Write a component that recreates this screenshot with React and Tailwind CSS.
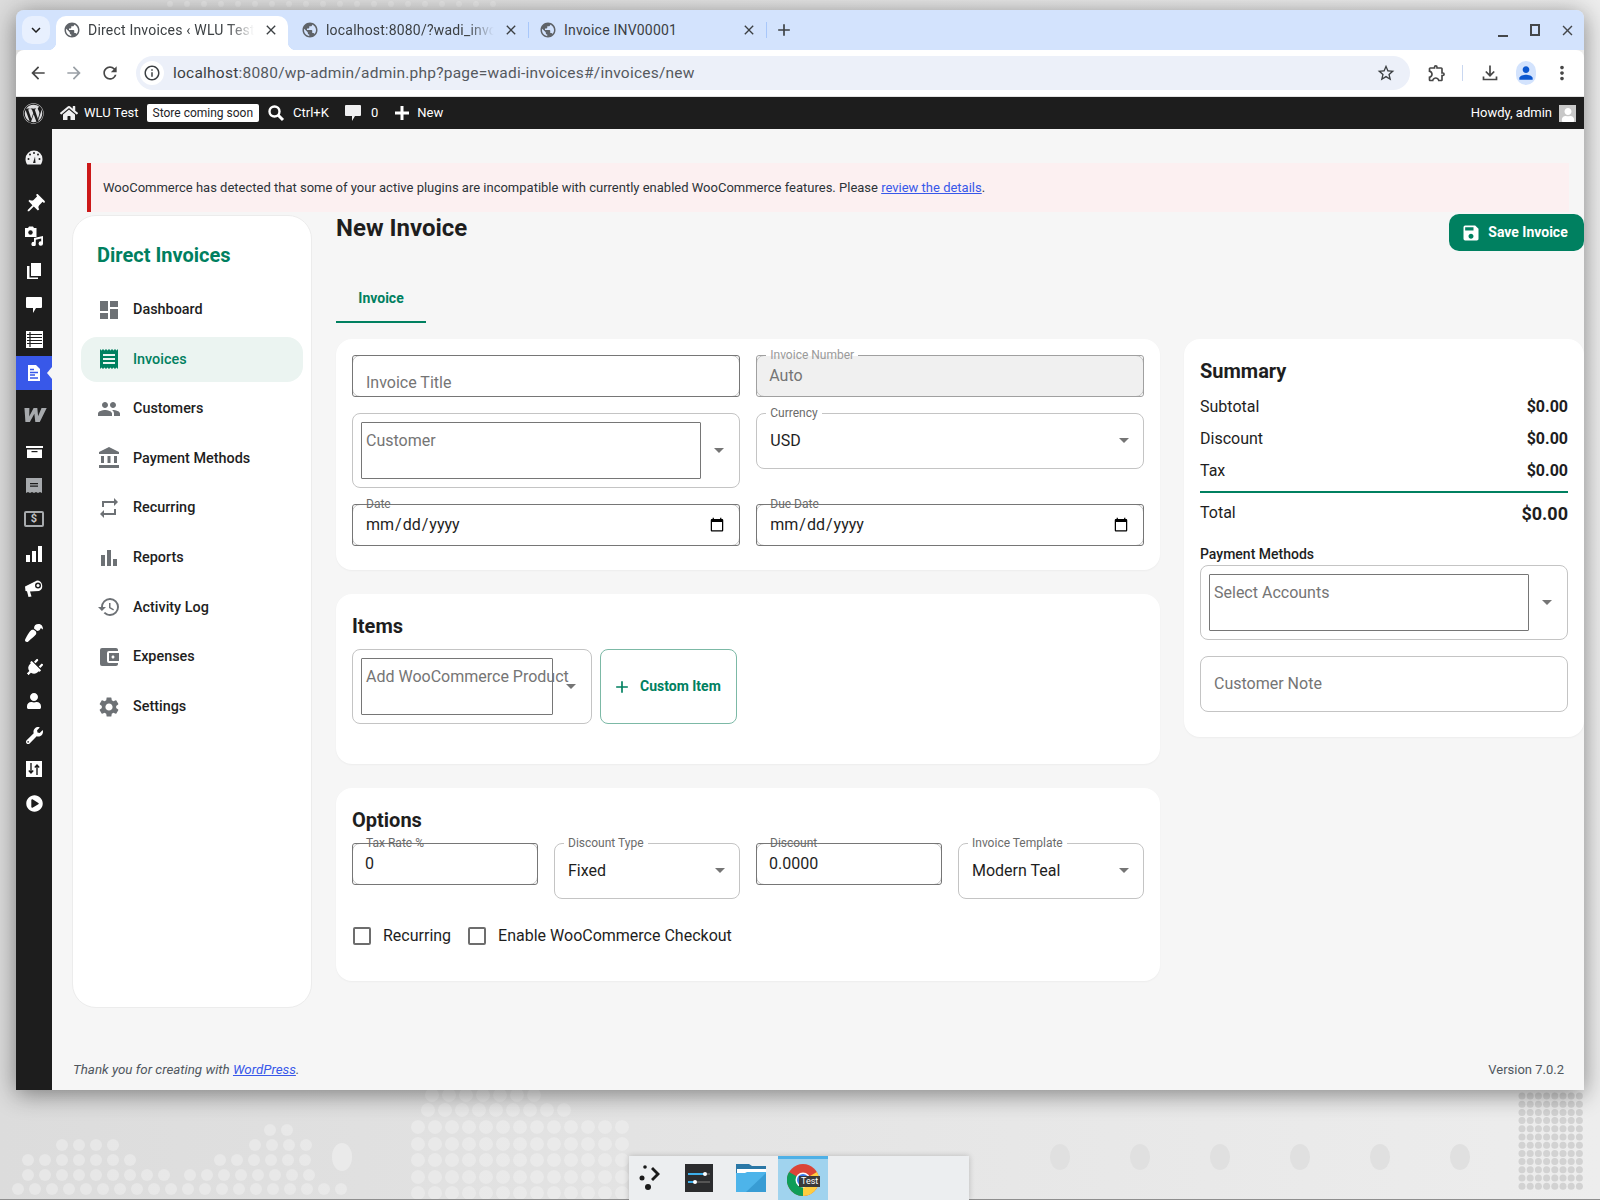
import React from 'react';
import {
  MdDashboard, MdReceipt, MdPeople, MdAccountBalance, MdRepeat, MdBarChart, MdHistory,
  MdAccountBalanceWallet, MdSettings, MdSave, MdAdd, MdPublic, MdClose, MdArrowBack, MdArrowForward,
  MdRefresh, MdInfoOutline, MdStarBorder, MdOutlineExtension, MdPerson, MdMoreVert, MdExpandMore,
  MdPushPin,
} from 'react-icons/md';
import { FaWordpress, FaHome, FaPaintBrush, FaPlug, FaUser, FaWrench, FaPlayCircle } from 'react-icons/fa';

const navItems = [
  { label: 'Dashboard', icon: MdDashboard },
  { label: 'Invoices', icon: MdReceipt, active: true },
  { label: 'Customers', icon: MdPeople },
  { label: 'Payment Methods', icon: MdAccountBalance },
  { label: 'Recurring', icon: MdRepeat },
  { label: 'Reports', icon: MdBarChart },
  { label: 'Activity Log', icon: MdHistory },
  { label: 'Expenses', icon: MdAccountBalanceWallet },
  { label: 'Settings', icon: MdSettings },
];

// desktop wallpaper dots: [x, y, cols, rows, r]
const dotBlocks = [
  [432, 1095, 7, 1, 7], [428, 1110, 9, 1, 7], [418, 1127, 13, 1, 7], [418, 1144, 13, 1, 7],
  [418, 1160, 13, 1, 7], [418, 1177, 13, 1, 7], [418, 1193, 13, 1, 7],
  [62, 1145, 4, 1, 6], [28, 1160, 7, 1, 6], [28, 1175, 9, 1, 6], [18, 1189, 20, 1, 6],
  [190, 1175, 8, 1, 6], [220, 1160, 6, 1, 6], [255, 1145, 4, 1, 6], [270, 1130, 2, 1, 6],
  [170, 4, 20, 1, 3],
];
const greyBlocks = [[1522, 1096, 8, 12, 3.5]];
const bigHex = [[1060, 1157], [1140, 1157], [1220, 1157], [1300, 1157], [1380, 1157], [1460, 1157]];

function Wallpaper() {
  return (
    <svg className="absolute inset-0" width="1600" height="1200">
      {dotBlocks.map(([x, y, cols, rows, r], i) =>
        Array.from({ length: cols * rows }).map((_, k) => (
          <circle key={`${i}-${k}`} cx={x + (k % cols) * 17} cy={y + Math.floor(k / cols) * 17} r={r} fill="#f1f1f1" opacity="0.5" />
        ))
      )}
      {greyBlocks.map(([x, y, cols, rows, r], i) =>
        Array.from({ length: cols * rows }).map((_, k) => (
          <circle key={`g${i}-${k}`} cx={x + (k % cols) * 8.2} cy={y + Math.floor(k / cols) * 8.2} r={r} fill="#d2d2d2" />
        ))
      )}
      {bigHex.map(([x, y]) => <ellipse key={x} cx={x} cy={y} rx="10" ry="13" fill="#e0e0e0" />)}
      <ellipse cx="342" cy="1157" rx="10" ry="14" fill="#eaeaea" />
      <rect x="0" y="1199" width="1600" height="1" fill="#8e8e8e" />
    </svg>
  );
}

function ChromeTab({ title, active, width, fade, iconClass }) {
  return (
    <div className={`relative flex items-center h-[34px] pb-[6px] pl-[8px] pr-[8px] shrink-0 ${width} ${active ? 'bg-white rounded-t-[10px]' : ''}`}>
      {active && <span className="absolute right-full bottom-0 w-[8px] h-[8px] bg-[radial-gradient(circle_at_0_0,transparent_8px,white_8.5px)]" />}
      {active && <span className="absolute left-full bottom-0 w-[8px] h-[8px] bg-[radial-gradient(circle_at_100%_0,transparent_8px,white_8.5px)]" />}
      <MdPublic className={`text-[18px] text-[#5f6368] shrink-0 ${iconClass}`} />
      <span className={`ml-[7px] flex-1 overflow-hidden whitespace-nowrap text-[14px] text-[#3c4043] tracking-[0.2px] ${fade ? '[mask-image:linear-gradient(to_right,black_82%,transparent_97%)]' : ''}`}>{title}</span>
      <MdClose className="text-[16px] text-[#3c4043] shrink-0 ml-[4px] mr-[1px]" />
    </div>
  );
}

function BrowserChrome() {
  return (
    <>
      <div className="flex h-[40px] pt-[6px] bg-[#d3e3fd]">
        <div className="ml-[6px] w-[28px] h-[28px] rounded-[10px] bg-[#e8f0fe] flex items-center justify-center">
          <MdExpandMore className="text-[18px] text-[#1f1f1f]" />
        </div>
        <div className="ml-[6px] flex items-start">
          <ChromeTab title="Direct Invoices ‹ WLU Test" active width="w-[232px]" fade iconClass="-ml-[1px]" />
          <ChromeTab title="localhost:8080/?wadi_invoice=1" width="w-[240px]" fade iconClass="ml-[5px]" />
          <div className="w-px h-[16px] mt-[6px] bg-[#a8c7fa] shrink-0" />
          <ChromeTab title="Invoice INV00001" width="w-[237px]" iconClass="ml-[2px]" />
          <div className="w-px h-[16px] mt-[6px] bg-[#a8c7fa] shrink-0" />
          <MdAdd className="ml-[7px] mt-[4px] text-[20px] text-[#3c4043]" />
        </div>
        <div className="ml-auto flex items-center gap-[16px] pr-[8px] pb-[6px]">
          <span className="w-[16px] h-[16px] flex items-end justify-center"><span className="w-[10px] h-[2px] mb-[1px] bg-[#44474a]" /></span>
          <span className="w-[16px] h-[16px] flex items-center justify-center"><span className="w-[10px] h-[12px] border-2 border-[#44474a]" /></span>
          <MdClose className="text-[17px] text-[#44474a]" />
        </div>
      </div>
      <div className="flex items-center h-[47px] bg-white border-b border-[#e3e3e3] rounded-t-[8px]">
        <div className="flex items-center pl-[10px] gap-[12px] text-[#474747]">
          <MdArrowBack className="text-[20px] mx-[2px]" />
          <MdArrowForward className="text-[20px] mx-[2px] text-[#9aa0a6]" />
          <MdRefresh className="text-[20px] mx-[2px]" />
        </div>
        <div className="ml-[14px] flex items-center w-[1274px] h-[34px] rounded-full bg-[#ecf0f9]">
          <span className="ml-[4px] w-[24px] h-[24px] rounded-full bg-white flex items-center justify-center">
            <MdInfoOutline className="text-[18px] text-[#3c4043]" />
          </span>
          <span className="ml-[9px] mt-[1px] text-[15.5px] tracking-[0.23px] text-[#3c4043]">localhost<span className="text-[#55595e]">:8080/wp-admin/admin.php?page=wadi-invoices#/invoices/new</span></span>
          <MdStarBorder className="ml-auto mr-[14px] text-[20px] text-[#3c4043]" />
        </div>
        <MdOutlineExtension className="ml-[17px] text-[20px] text-[#474747]" />
        <span className="ml-[15px] w-px h-[16px] bg-[#c9d7f0]" />
        <svg className="ml-[17px]" width="20" height="20" viewBox="0 0 20 20" fill="none" stroke="#474747" strokeWidth="1.7">
          <path d="M10 2.5v10M5.8 8.5 10 12.7l4.2-4.2M3.5 13.5v3h13v-3" />
        </svg>
        <span className="ml-[16px] w-[20px] h-[24px] rounded-full bg-[#d3e3fd] flex items-center justify-center overflow-hidden">
          <MdPerson className="text-[20px] text-[#0b57d0]" />
        </span>
        <MdMoreVert className="ml-[15px] text-[22px] text-[#474747]" />
      </div>
    </>
  );
}

function AdminBar() {
  return (
    <div className="flex items-center h-[32px] bg-[#1d1d1d] text-white text-[13px]">
      <FaWordpress className="ml-[7px] text-[21px] text-[#dcdcde]" />
      <FaHome className="ml-[16px] text-[18px] text-[#f0f0f1]" />
      <span className="ml-[6px]">WLU Test</span>
      <span className="ml-[8px] h-[18px] px-[6px] bg-white rounded-[2px] text-[#1d2327] text-[12px] leading-[18px]">Store coming soon</span>
      <svg className="ml-[8px]" width="18" height="18" viewBox="0 0 18 18" fill="none" stroke="#fff"><circle cx="7.500" cy="7.500" r="5" strokeWidth="2.400" /><path d="M11 11l5 5" strokeWidth="3" /></svg>
      <span className="ml-[8px]">Ctrl+K</span>
      <svg className="ml-[15px]" width="18" height="18" viewBox="0 0 18 18" fill="#f0f0f1"><path d="M2 1h14a1 1 0 0 1 1 1v9a1 1 0 0 1-1 1h-5l-3 5v-5H2a1 1 0 0 1-1-1V2a1 1 0 0 1 1-1z" /></svg>
      <span className="ml-[9px]">0</span>
      <svg className="ml-[16px]" width="16" height="16" viewBox="0 0 16 16" fill="#fff"><path d="M6.500 1h3v5.500H15v3H9.500V15h-3V9.500H1v-3h5.500z" /></svg>
      <span className="ml-[7px]">New</span>
      <span className="ml-auto">Howdy, admin</span>
      <span className="ml-[7px] mr-[8px] w-[17px] h-[17px] bg-[#c8c8c8] flex items-end justify-center overflow-hidden">
        <FaUser className="text-[14px] text-white" />
      </span>
    </div>
  );
}

function MenuIcon({ children, className = '' }) {
  return <div className={`relative h-[34px] flex items-center justify-center text-white ${className}`}>{children}</div>;
}

function AdminMenu() {
  return (
    <div className="w-[36px] shrink-0 bg-[#1d1d1d] pt-[12px]">
      <MenuIcon>
        <svg width="20" height="20" viewBox="0 0 20 20"><path fill="#f0f0f1" d="M10 2.5a8.5 8.5 0 0 0-8.5 8.5c0 2.3.7 4.2 1.8 5.5h13.4c1.100-1.300 1.800-3.200 1.800-5.500A8.500 8.500 0 0 0 10 2.500z" /><circle cx="6" cy="6.500" r="1" fill="#1d1d1d" /><circle cx="10" cy="5" r="1" fill="#1d1d1d" /><circle cx="14" cy="6.500" r="1" fill="#1d1d1d" /><circle cx="4.500" cy="11" r="1" fill="#1d1d1d" /><circle cx="15.500" cy="11" r="1" fill="#1d1d1d" /><path d="M11 8.500 9 15h2.500z" fill="#1d1d1d" /></svg>
      </MenuIcon>
      <MenuIcon className="mt-[12px]"><MdPushPin className="text-[23px] rotate-45" /></MenuIcon>
      <MenuIcon className="-mt-[2px]">
        <svg width="20" height="20" viewBox="0 0 20 20" fill="#fff"><path d="M1 2h3l1-1.500h4L10 2h2.500v9H1z" /><circle cx="6.500" cy="6.500" r="2.200" fill="#1d1d1d" /><path d="M10 12l9-2v7.500a2.200 2.200 0 1 1-1.800-2.100V12.500l-5.400 1.200v4.300a2.200 2.200 0 1 1-1.800-2.100z" /></svg>
      </MenuIcon>
      <MenuIcon className="mt-[1px]">
        <svg width="20" height="20" viewBox="0 0 20 20" fill="#fff"><path d="M7 2h10v13H7z" /><path d="M3 5h2.500v11.500H14V18H3z" /></svg>
      </MenuIcon>
      <MenuIcon>
        <svg width="20" height="20" viewBox="0 0 20 20" fill="#fff"><path d="M3 2h14a1 1 0 0 1 1 1v9a1 1 0 0 1-1 1h-5l-3 5v-5H3a1 1 0 0 1-1-1V3a1 1 0 0 1 1-1z" /></svg>
      </MenuIcon>
      <MenuIcon>
        <svg width="20" height="20" viewBox="0 0 20 20"><path fill="#fff" d="M2 2h17v17H2z" /><path stroke="#1d1d1d" strokeWidth="1.200" d="M3 5.500h15M3 8.500h15M3 11.500h15M3 14.500h15M6 3v15" /></svg>
      </MenuIcon>
      <div className="relative h-[34px] flex items-center justify-center bg-[#3858e9]">
        <svg width="20" height="20" viewBox="0 0 20 20"><path fill="#fff" d="M4 2h8l4 4v12H4z" /><path stroke="#3858e9" strokeWidth="1.300" d="M6 6.500h4M6 9.500h8M6 12h5M6 15h8" /></svg>
        <span className="absolute right-0 top-[11px] border-y-[6px] border-y-transparent border-r-[5px] border-r-[#f6f6f6]" />
      </div>
      <MenuIcon className="mt-[8px]"><span className="italic font-black text-[26px] text-[#a7aaad] leading-none -mt-[5px] scale-x-125">w</span></MenuIcon>
      <MenuIcon className="mt-[4px]">
        <svg width="20" height="20" viewBox="0 0 20 20"><path fill="#fff" d="M2 3h17v2H2z" /><path fill="#fff" d="M3 6.500h15V15H3z" /><path fill="#1d1d1d" d="M7.500 8h6v1.200h-6z" /></svg>
      </MenuIcon>
      <MenuIcon className="-mt-[1px]">
        <svg width="20" height="20" viewBox="0 0 20 20"><path fill="#a7aaad" d="M2 2h16v15l-2-1-2 1-2-1-2 1-2-1-2 1-2-1-2 1z" /><path fill="#1d1d1d" d="M6 7h8v1.200H6zM6 9.500h8v1.200H6z" /></svg>
      </MenuIcon>
      <MenuIcon className="-mt-[1px]">
        <span className="flex items-center justify-center w-[20px] h-[16px] border-2 border-[#a7aaad] rounded-[2px] text-[11px] font-bold text-[#c3c4c7]">$</span>
      </MenuIcon>
      <MenuIcon className="mt-[1px]">
        <svg width="20" height="20" viewBox="0 0 20 20" fill="#fff"><path d="M2 11h4v7H2zM8 7h4v11H8zM14 2h4v16h-4z" /></svg>
      </MenuIcon>
      <MenuIcon>
        <svg width="20" height="20" viewBox="0 0 20 20"><path fill="#fff" d="M1 8.500 13 2.500a5.500 5.500 0 0 1 2 10.500L6 13.500l1.500 5-3 .5L3 13.200 1.500 13z" /><circle cx="14" cy="7.500" r="3" fill="#1d1d1d" /><circle cx="14" cy="7.500" r="1.500" fill="#fff" /></svg>
      </MenuIcon>
      <MenuIcon className="mt-[11px]"><FaPaintBrush className="text-[18px] rotate-180" /></MenuIcon>
      <MenuIcon className="mt-[1px]"><FaPlug className="text-[18px] rotate-45" /></MenuIcon>
      <MenuIcon className="-mt-[1px]"><FaUser className="text-[16px]" /></MenuIcon>
      <MenuIcon><FaWrench className="text-[17px]" /></MenuIcon>
      <MenuIcon>
        <svg width="18" height="18" viewBox="0 0 18 18"><path fill="#fff" d="M1 1h16v16H1z" /><path stroke="#1d1d1d" strokeWidth="1.400" fill="none" d="M6 3v10M3.800 10.500 6 13l2.200-2.500M12 15V5M9.800 7.500 12 5l2.200 2.500" /></svg>
      </MenuIcon>
      <MenuIcon><FaPlayCircle className="text-[17px]" /></MenuIcon>
    </div>
  );
}

function SideNav() {
  return (
    <aside className="w-[240px] h-[793px] shrink-0 bg-white rounded-[24px] border border-[#ececec] px-[8px]">
      <h2 className="pl-[16px] pt-[24px] text-[20px] leading-[30px] font-bold text-[#008060]">Direct Invoices</h2>
      <nav className="mt-[17px] flex flex-col gap-[4.67px]">
        {navItems.map((item) => {
          const Icon = item.icon;
          return (
            <div key={item.label} className={`flex items-center h-[45px] pl-[16px] rounded-[16px] ${item.active ? 'bg-[#ebf4f1] text-[#008060]' : 'text-[#1e1e1e]'}`}>
              <Icon className={`text-[24px] ${item.active ? 'text-[#008060]' : 'text-[#6d7175]'}`} />
              <span className={`ml-[12px] text-[14.4px] font-medium ${item.active ? 'mt-[1px]' : ''}`}>{item.label}</span>
            </div>
          );
        })}
      </nav>
    </aside>
  );
}

function Arrow({ className = '' }) {
  return <span className={`inline-block border-x-[5px] border-x-transparent border-t-[5px] border-t-[#757575] ${className}`} />;
}

function Label({ children, notch, muted, notchClass = 'left-[9px] -top-[8px]' }) {
  if (notch) {
    return (
      <span className={`absolute ${notchClass} px-[4px] text-[12px] leading-[14px] whitespace-nowrap ${muted ? 'text-[#9a9a9a] bg-[linear-gradient(transparent_6px,white_6px,white_8px,transparent_8px)]' : 'text-[#6b6b6b] bg-[linear-gradient(transparent_7px,white_7px,white_9px,transparent_9px)]'}`}>{children}</span>
    );
  }
  return <span className="absolute -top-[7px] left-[14px] text-[12px] leading-[14px] whitespace-nowrap text-[#6b6b6b]">{children}</span>;
}

function TextField({ label, notch, placeholder, value, type = 'text', disabled, inputClass = 'px-[12px]' }) {
  return (
    <div className="relative h-[42px]">
      {/* the light outline sits under the input so only its rounded corners show */}
      <span className={`absolute inset-0 rounded-[8px] border border-[#c4c4c4] ${disabled ? 'bg-[#f0f0f0]' : 'bg-white'}`} />
      <input
        type={type}
        disabled={disabled}
        placeholder={placeholder}
        defaultValue={value}
        className={`relative w-full h-full border rounded-[3px] bg-transparent text-[16px] leading-[24px] text-[#1e1e1e] placeholder:text-[#757575] placeholder:opacity-100 outline-none ${disabled ? 'border-[#a0a0a0] placeholder:text-[#9a9a9a]' : 'border-[#767676]'} ${inputClass}`}
      />
      {label && <Label notch={notch} muted={disabled} notchClass="left-[10px] -top-[7px]">{label}</Label>}
    </div>
  );
}

function SelectField({ label, value }) {
  return (
    <div className="relative h-[56px] rounded-[8px] border border-[#c4c4c4] flex items-center pl-[13px] pr-[14px] pb-[1px] text-[16px] text-[#1e1e1e]">
      <span>{value}</span>
      <Arrow className="ml-auto" />
      <Label notch>{label}</Label>
    </div>
  );
}

function AutoField({ placeholder, boxClass, arrowClass = '', className = '' }) {
  return (
    <div className={`relative h-[75px] rounded-[8px] border border-[#c4c4c4] flex items-center ${className}`}>
      <div className={`ml-[8px] h-[57px] border border-[#767676] rounded-[1px] pl-[4px] pt-[6px] text-[16px] leading-[24px] text-[#757575] whitespace-nowrap ${boxClass}`}>{placeholder}</div>
      <Arrow className={arrowClass} />
    </div>
  );
}

function Card({ children, className = '' }) {
  return <section className={`bg-white rounded-[16px] shadow-[0_1px_2px_rgba(0,0,0,0.04)] ${className}`}>{children}</section>;
}

function Check({ label, className = '' }) {
  return (
    <label className={`flex items-center ${className}`}>
      <input type="checkbox" className="appearance-none w-[18px] h-[18px] border-2 border-[#6d6d6d] rounded-[2px] bg-white" />
      <span className="ml-[12px] text-[16px] text-[#1e1e1e]">{label}</span>
    </label>
  );
}

function SummaryRow({ label, value }) {
  return (
    <div className="flex items-center justify-between h-[32px] text-[16px] text-[#1e1e1e]">
      <span>{label}</span>
      <span className="font-bold">{value}</span>
    </div>
  );
}

function InvoiceForm() {
  return (
    <div className="flex-1 min-w-0">
      <div className="flex justify-between h-[76px]">
        <h1 className="-mt-[1px] text-[24px] leading-[28px] font-bold text-[#1e1e1e]">New Invoice</h1>
        <button className="-mt-[1px] h-[37px] w-[135px] rounded-[10px] bg-[#008060] text-white flex items-center justify-center gap-[7px] text-[14px] font-bold">
          <MdSave className="text-[20px] -ml-[4px]" />
          Save Invoice
        </button>
      </div>
      <div className="w-[90px] h-[32px] border-b-2 border-[#008060] text-center text-[14px] font-bold text-[#008060] leading-[14px]">Invoice</div>
      <div className="mt-[16px] flex gap-[24px]">
        <div className="w-[824px] shrink-0 flex flex-col gap-[24px]">
          <Card className="h-[231px] p-[16px]">
            <div className="grid grid-cols-2 gap-x-[16.5px] gap-y-[16px] items-start">
              <TextField placeholder="Invoice Title" inputClass="px-[13px] pt-[13px]" />
              <TextField label="Invoice Number" notch placeholder="Auto" disabled inputClass="px-[12px] pb-[2px]" />
              <AutoField placeholder="Customer" boxClass="w-[340px]" arrowClass="ml-[13px]" />
              <SelectField label="Currency" value="USD" />
              <TextField label="Date" type="date" />
              <TextField label="Due Date" type="date" />
            </div>
          </Card>
          <Card className="h-[170px] px-[16px] pt-[20px]">
            <h3 className="text-[20px] leading-[24px] font-bold text-[#1e1e1e]">Items</h3>
            <div className="mt-[11px] flex gap-[8px]">
              <AutoField placeholder="Add WooCommerce Product" boxClass="w-[192px]" arrowClass="ml-[13px]" className="w-[240px]" />
              <button className="h-[75px] w-[137px] rounded-[8px] border border-[#7cb9a6] text-[#008060] text-[14px] font-bold flex items-center pl-[11px] gap-[8px]">
                <MdAdd className="text-[20px]" />
                Custom Item
              </button>
            </div>
          </Card>
          <Card className="h-[193px] px-[16px] pt-[20px]">
            <h3 className="text-[20px] leading-[24px] font-bold text-[#1e1e1e]">Options</h3>
            <div className="mt-[11px] grid grid-cols-4 gap-x-[16px] items-start">
              <TextField label="Tax Rate %" value="0" inputClass="px-[12px] pb-[2px]" />
              <SelectField label="Discount Type" value="Fixed" />
              <TextField label="Discount" value="0.0000" inputClass="px-[12px] pb-[2px]" />
              <SelectField label="Invoice Template" value="Modern Teal" />
            </div>
            <div className="mt-[25px] flex items-center gap-[17px]">
              <Check label="Recurring" className="ml-[1px]" />
              <Check label="Enable WooCommerce Checkout" />
            </div>
          </Card>
        </div>
        <Card className="w-[400px] h-[398px] shrink-0 px-[16px] pt-[20px]">
          <h3 className="text-[20px] leading-[24px] font-bold text-[#1e1e1e]">Summary</h3>
          <div className="mt-[8px]">
            <SummaryRow label="Subtotal" value="$0.00" />
            <SummaryRow label="Discount" value="$0.00" />
            <SummaryRow label="Tax" value="$0.00" />
          </div>
          <div className="mt-[4px] h-[2px] bg-[#008060]" />
          <div className="mt-[9px] flex justify-between text-[16px] leading-[24px] text-[#1e1e1e]">
            <span className="-mt-[1px]">Total</span>
            <span className="text-[18px] font-bold">$0.00</span>
          </div>
          <div className="mt-[18px] text-[14px] leading-[20px] font-medium text-[#1e1e1e]">Payment Methods</div>
          <AutoField placeholder="Select Accounts" boxClass="w-[320px]" arrowClass="ml-[13px]" className="mt-[1px]" />
          <div className="mt-[16px] h-[56px] rounded-[8px] border border-[#c4c4c4] flex items-center pl-[13px] text-[16px] text-[#757575]">Customer Note</div>
        </Card>
      </div>
    </div>
  );
}

function Dock() {
  return (
    <div className="absolute left-[629px] top-[1156px] w-[340px] h-[44px] bg-[#eceef0] shadow-[0_0_6px_rgba(0,0,0,0.2)] flex items-center">
      <svg width="44" height="44" viewBox="0 0 44 44" fill="#1a1a1a">
        <circle cx="16" cy="11" r="1.800" /><circle cx="13" cy="22" r="2.500" /><circle cx="19" cy="31" r="3" />
        <path d="M24 11l7 7 -7 7 -2-2 5-5 -5-5z" />
      </svg>
      <svg className="ml-[12px]" width="28" height="28" viewBox="0 0 28 28">
        <rect width="28" height="28" fill="#2b2c2e" /><rect x="3" y="9" width="22" height="2" fill="#555" /><rect x="3" y="9" width="17" height="2" fill="#3daee9" /><circle cx="20" cy="10" r="2" fill="#fff" /><rect x="3" y="17" width="22" height="2" fill="#555" /><rect x="3" y="17" width="7" height="2" fill="#3daee9" /><circle cx="10" cy="18" r="2" fill="#fff" />
      </svg>
      <svg className="ml-[23px]" width="30" height="28" viewBox="0 0 30 28">
        <path fill="#2a77a6" d="M0 0h13l3 2h14v26H0z" /><rect x="1" y="5" width="29" height="5" fill="#fff" /><path fill="#4db4ea" d="M0 9h9l2 -1h19v20H0z" /><path fill="#2c8cc4" d="M30 9v19H10z" opacity="0.6" />
      </svg>
      <div className="relative ml-[12px] w-[50px] h-[44px] bg-[#a0d3ee] border-t-[3px] border-[#4eb0e6] flex items-center justify-center">
        <svg width="32" height="32" viewBox="0 0 32 32">
          <circle cx="16" cy="16" r="16" fill="#db4437" />
          <path d="M2.100 8A16 16 0 0 0 16 32L16 16Z" fill="#0f9d58" />
          <path d="M16 32A16 16 0 0 0 29.900 8L16 16Z" fill="#ffcd40" />
          <circle cx="16" cy="16" r="7.500" fill="#fff" /><circle cx="16" cy="16" r="6" fill="#3b78e7" />
        </svg>
        <span className="absolute left-[21px] top-[17px] px-[2px] bg-[#3a3a3a] text-white text-[9px] leading-[11px]">Test</span>
      </div>
    </div>
  );
}

export default function App() {
  return (
    <div className="relative w-[1600px] h-[1200px] overflow-hidden bg-[linear-gradient(to_right,#dcdcdc,#e4e4e4_45%,#ededed)] font-[Roboto,sans-serif]">
      <Wallpaper />
      <div className="relative pt-[10px] pl-[16px]">
        <div className="w-[1568px] h-[1080px] flex flex-col rounded-t-[8px] overflow-hidden shadow-[0_4px_24px_rgba(0,0,0,0.45)]">
          <BrowserChrome />
          <AdminBar />
          <div className="flex flex-1 min-h-0 bg-[#f6f6f6]">
            <AdminMenu />
            <div className="flex-1 min-w-0 pt-[34px] flex flex-col">
              <div className="ml-[35px] mr-[15px] h-[49px] shrink-0 flex items-center border-l-4 border-[#cc1818] bg-[#fcf0f1] pl-[12px] text-[13px] text-[#2c3338]">
                <span>
                  WooCommerce has detected that some of your active plugins are incompatible with currently enabled WooCommerce features. Please <a href="#" className="text-[#3858e9] underline">review the details</a>.
                </span>
              </div>
              <div className="mt-[3px] flex gap-[24px] pl-[20px]">
                <SideNav />
                <InvoiceForm />
              </div>
              <div className="mt-auto mb-[10px] pl-[21px] pr-[20px] flex justify-between text-[13px] text-[#50575e]">
                <span className="italic text-[13.36px]">Thank you for creating with <a href="#" className="text-[#3858e9] underline">WordPress</a>.</span>
                <span>Version 7.0.2</span>
              </div>
            </div>
          </div>
        </div>
      </div>
      <Dock />
    </div>
  );
}
